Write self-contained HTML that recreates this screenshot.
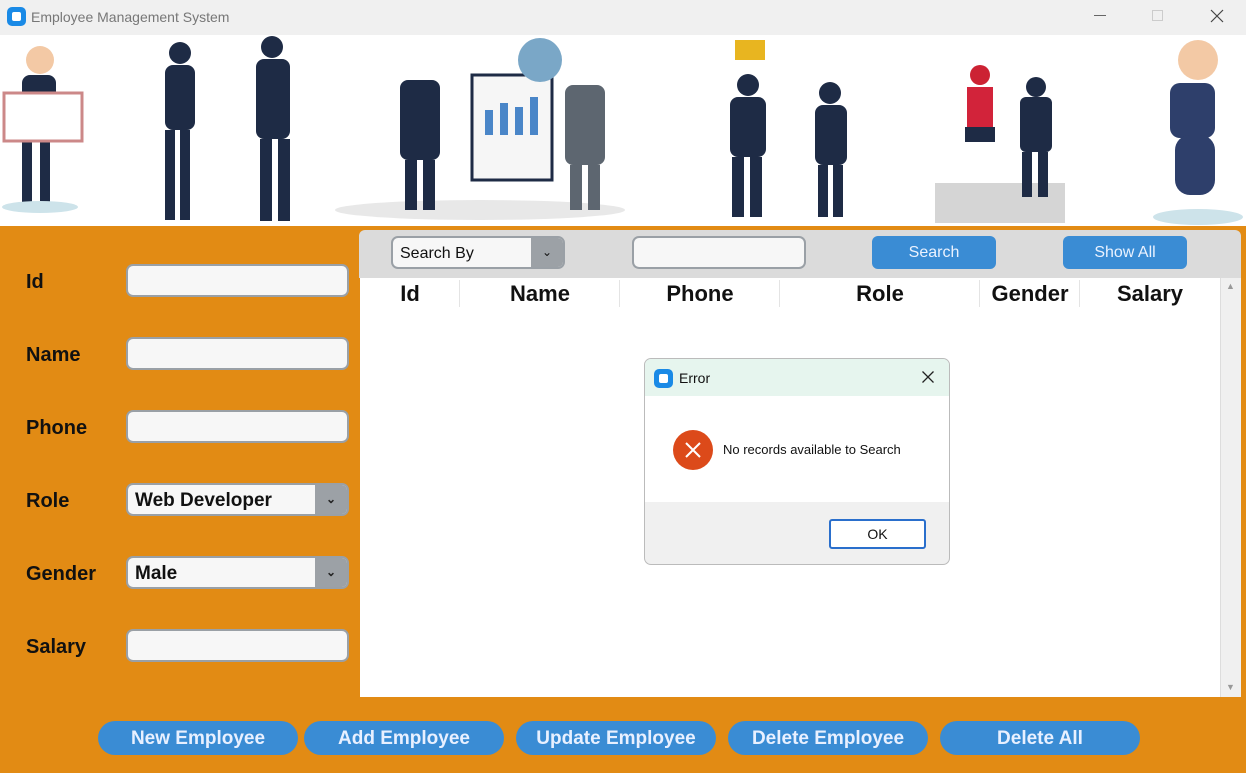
<!DOCTYPE html>
<html><head><meta charset="utf-8"><style>
*{margin:0;padding:0;box-sizing:border-box}
body{width:1246px;height:773px;overflow:hidden;background:#e28b14;font-family:"Liberation Sans",sans-serif;position:relative}
.abs{position:absolute}
.title{left:0;top:0;width:1246px;height:35px;background:#f0f0f0}
.banner{left:0;top:35px;width:1246px;height:191px;background:#fff;overflow:hidden}
.lbl{position:absolute;left:26px;font-weight:bold;font-size:20px;color:#111}
.inp{position:absolute;left:126px;width:223px;height:33px;background:#f7f7f7;border:2px solid #9aa0a6;border-radius:7px}
.cb{position:absolute;left:126px;width:223px;height:33px;background:#f7f7f7;border:2px solid #9aa0a6;border-radius:7px;font-weight:bold;font-size:19px;padding:5px 7px;color:#111}
.cb .ar{position:absolute;right:0;top:0;width:32px;height:29px;background:#9ca1a6;border-radius:0 5px 5px 0;color:#222;font-size:12px;text-align:center;line-height:29px}
.bb{position:absolute;top:721px;height:34px;background:#3a8cd4;border-radius:17px;color:#e8f0ff;font-weight:bold;font-size:19px;text-align:center;line-height:36px}
.th{position:absolute;top:281px;font-weight:bold;font-size:22px;color:#111;text-align:center}
.sep{position:absolute;top:280px;width:1px;height:27px;background:#e4e4e4}
</style></head><body>
<div class="abs title">
 <div class="abs" style="left:7px;top:7px;width:19px;height:19px;background:#1a8ae6;border-radius:5px"><div style="margin:5px;width:9px;height:9px;background:#fff;border-radius:2px"></div></div>
 <div class="abs" style="left:31px;top:9px;font-size:14px;color:#777">Employee Management System</div>
 <div class="abs" style="left:1094px;top:15px;width:12px;height:1px;background:#666"></div>
 <div class="abs" style="left:1152px;top:10px;width:11px;height:11px;border:1px solid #ccc"></div>
 <svg class="abs" style="left:1210px;top:9px" width="14" height="14"><path d="M1 1L13 13M13 1L1 13" stroke="#444" stroke-width="1.2"/></svg>
</div>
<div class="abs banner">
 <svg width="1246" height="191">
  <g fill="#1e2b45">
   <circle cx="40" cy="25" r="14" fill="#f3c9a5"/><rect x="22" y="40" width="34" height="55" rx="8"/><rect x="22" y="95" width="10" height="75"/><rect x="40" y="95" width="10" height="75"/>
   <rect x="4" y="58" width="78" height="48" fill="#fff" stroke="#c88" stroke-width="3"/>
   <ellipse cx="40" cy="172" rx="38" ry="6" fill="#cde3ea"/>
   <circle cx="180" cy="18" r="11"/><rect x="165" y="30" width="30" height="65" rx="8"/><rect x="165" y="95" width="10" height="90"/><rect x="180" y="95" width="10" height="90"/>
   <circle cx="272" cy="12" r="11"/><rect x="256" y="24" width="34" height="80" rx="8"/><rect x="260" y="104" width="12" height="82"/><rect x="278" y="104" width="12" height="82"/>
   <ellipse cx="480" cy="175" rx="145" ry="10" fill="#e8e8e8"/>
   <rect x="400" y="45" width="40" height="80" rx="8"/><rect x="405" y="125" width="12" height="50"/><rect x="423" y="125" width="12" height="50"/>
   <rect x="472" y="40" width="80" height="105" fill="#f6f6f6" stroke="#1e2b45" stroke-width="3"/>
   <rect x="485" y="75" width="8" height="25" fill="#4a86c8"/><rect x="500" y="68" width="8" height="32" fill="#4a86c8"/><rect x="515" y="72" width="8" height="28" fill="#4a86c8"/><rect x="530" y="62" width="8" height="38" fill="#4a86c8"/>
   <circle cx="540" cy="25" r="22" fill="#7aa7c7"/>
   <rect x="565" y="50" width="40" height="80" rx="8" fill="#5d6670"/><rect x="570" y="130" width="12" height="45" fill="#5d6670"/><rect x="588" y="130" width="12" height="45" fill="#5d6670"/>
   <rect x="735" y="5" width="30" height="20" fill="#e8b520"/>
   <circle cx="748" cy="50" r="11"/><rect x="730" y="62" width="36" height="60" rx="8"/><rect x="732" y="122" width="12" height="60"/><rect x="750" y="122" width="12" height="60"/>
   <circle cx="830" cy="58" r="11"/><rect x="815" y="70" width="32" height="60" rx="8"/><rect x="818" y="130" width="10" height="52"/><rect x="833" y="130" width="10" height="52"/>
   <rect x="935" y="148" width="130" height="40" fill="#d5d5d5"/>
   <circle cx="980" cy="40" r="10" fill="#c23"/><rect x="967" y="52" width="26" height="40" fill="#d2233a"/><rect x="965" y="92" width="30" height="15"/>
   <circle cx="1036" cy="52" r="10"/><rect x="1020" y="62" width="32" height="55" rx="6"/><rect x="1022" y="117" width="10" height="45"/><rect x="1038" y="117" width="10" height="45"/>
   <circle cx="1198" cy="25" r="20" fill="#f3c9a5"/><rect x="1170" y="48" width="45" height="55" rx="10" fill="#2e3f6b"/><rect x="1175" y="100" width="40" height="60" rx="15" fill="#2e3f6b"/>
   <ellipse cx="1198" cy="182" rx="45" ry="8" fill="#cde3ea"/>
  </g>
 </svg>
</div>
<div class="lbl" style="top:271px">Id</div><div class="inp" style="top:264px"></div>
<div class="lbl" style="top:344px">Name</div><div class="inp" style="top:337px"></div>
<div class="lbl" style="top:417px">Phone</div><div class="inp" style="top:410px"></div>
<div class="lbl" style="top:490px">Role</div><div class="cb" style="top:483px">Web Developer<div class="ar">⌄</div></div>
<div class="lbl" style="top:563px">Gender</div><div class="cb" style="top:556px">Male<div class="ar">⌄</div></div>
<div class="lbl" style="top:636px">Salary</div><div class="inp" style="top:629px"></div>

<div class="abs" style="left:359px;top:230px;width:882px;height:48px;background:#dbdbdb;border-radius:6px 6px 0 0"></div>
<div class="abs" style="left:391px;top:236px;width:174px;height:33px;background:#f7f7f7;border:2px solid #9aa0a6;border-radius:7px;font-size:16px;padding:7px 7px;color:#111">Search By<div style="position:absolute;right:0;top:0;width:32px;height:29px;background:#9ca1a6;border-radius:0 5px 5px 0;text-align:center;line-height:29px;font-size:12px">⌄</div></div>
<div class="abs" style="left:632px;top:236px;width:174px;height:33px;background:#f7f7f7;border:2px solid #9aa0a6;border-radius:7px"></div>
<div class="abs" style="left:872px;top:236px;width:124px;height:33px;background:#3a8cd4;border-radius:6px;color:#eaf2ff;font-size:16px;text-align:center;line-height:33px">Search</div>
<div class="abs" style="left:1063px;top:236px;width:124px;height:33px;background:#3a8cd4;border-radius:6px;color:#eaf2ff;font-size:16px;text-align:center;line-height:33px">Show All</div>
<div class="abs" style="left:360px;top:278px;width:860px;height:419px;background:#fff"></div>
<div class="abs" style="left:1220px;top:278px;width:21px;height:419px;background:#f0f0f0;border-left:1px solid #ddd"></div>
<div class="abs" style="left:1226px;top:281px;font-size:9px;color:#999">▲</div>
<div class="abs" style="left:1226px;top:682px;font-size:9px;color:#999">▼</div>
<div class="th" style="left:360px;width:100px">Id</div><div class="sep" style="left:459px"></div>
<div class="th" style="left:460px;width:160px">Name</div><div class="sep" style="left:619px"></div>
<div class="th" style="left:620px;width:160px">Phone</div><div class="sep" style="left:779px"></div>
<div class="th" style="left:780px;width:200px">Role</div><div class="sep" style="left:979px"></div>
<div class="th" style="left:980px;width:100px">Gender</div><div class="sep" style="left:1079px"></div>
<div class="th" style="left:1080px;width:140px">Salary</div>

<div class="abs" style="left:644px;top:358px;width:306px;height:207px;border:1px solid #bbb;border-radius:7px;background:#f0f0f0;overflow:hidden">
 <div style="height:37px;background:#e6f5ee;position:relative">
  <div class="abs" style="left:9px;top:10px;width:19px;height:19px;background:#1a8ae6;border-radius:5px"><div style="margin:5px;width:9px;height:9px;background:#fff;border-radius:2px"></div></div>
  <div class="abs" style="left:34px;top:11px;font-size:14px;color:#111">Error</div>
  <svg class="abs" style="left:277px;top:12px" width="12" height="12"><path d="M0.5 0.5L11.5 11.5M11.5 0.5L0.5 11.5" stroke="#222" stroke-width="1.3"/></svg>
 </div>
 <div style="height:106px;background:#fff;position:relative">
  <div class="abs" style="left:28px;top:34px;width:40px;height:40px;border-radius:50%;background:#dc4a1a"></div>
  <svg class="abs" style="left:40px;top:46px" width="16" height="16"><path d="M1 1L15 15M15 1L1 15" stroke="#fff" stroke-width="2"/></svg>
  <div class="abs" style="left:78px;top:46px;font-size:13px;color:#111">No records available to Search</div>
 </div>
 <div class="abs" style="left:184px;top:160px;width:97px;height:30px;background:#fff;border:2px solid #2a6fcc;border-radius:3px;font-size:14px;text-align:center;line-height:26px;color:#111">OK</div>
</div>

<div class="bb" style="left:98px;width:200px">New Employee</div>
<div class="bb" style="left:304px;width:200px">Add Employee</div>
<div class="bb" style="left:516px;width:200px">Update Employee</div>
<div class="bb" style="left:728px;width:200px">Delete Employee</div>
<div class="bb" style="left:940px;width:200px">Delete All</div>
</body></html>
